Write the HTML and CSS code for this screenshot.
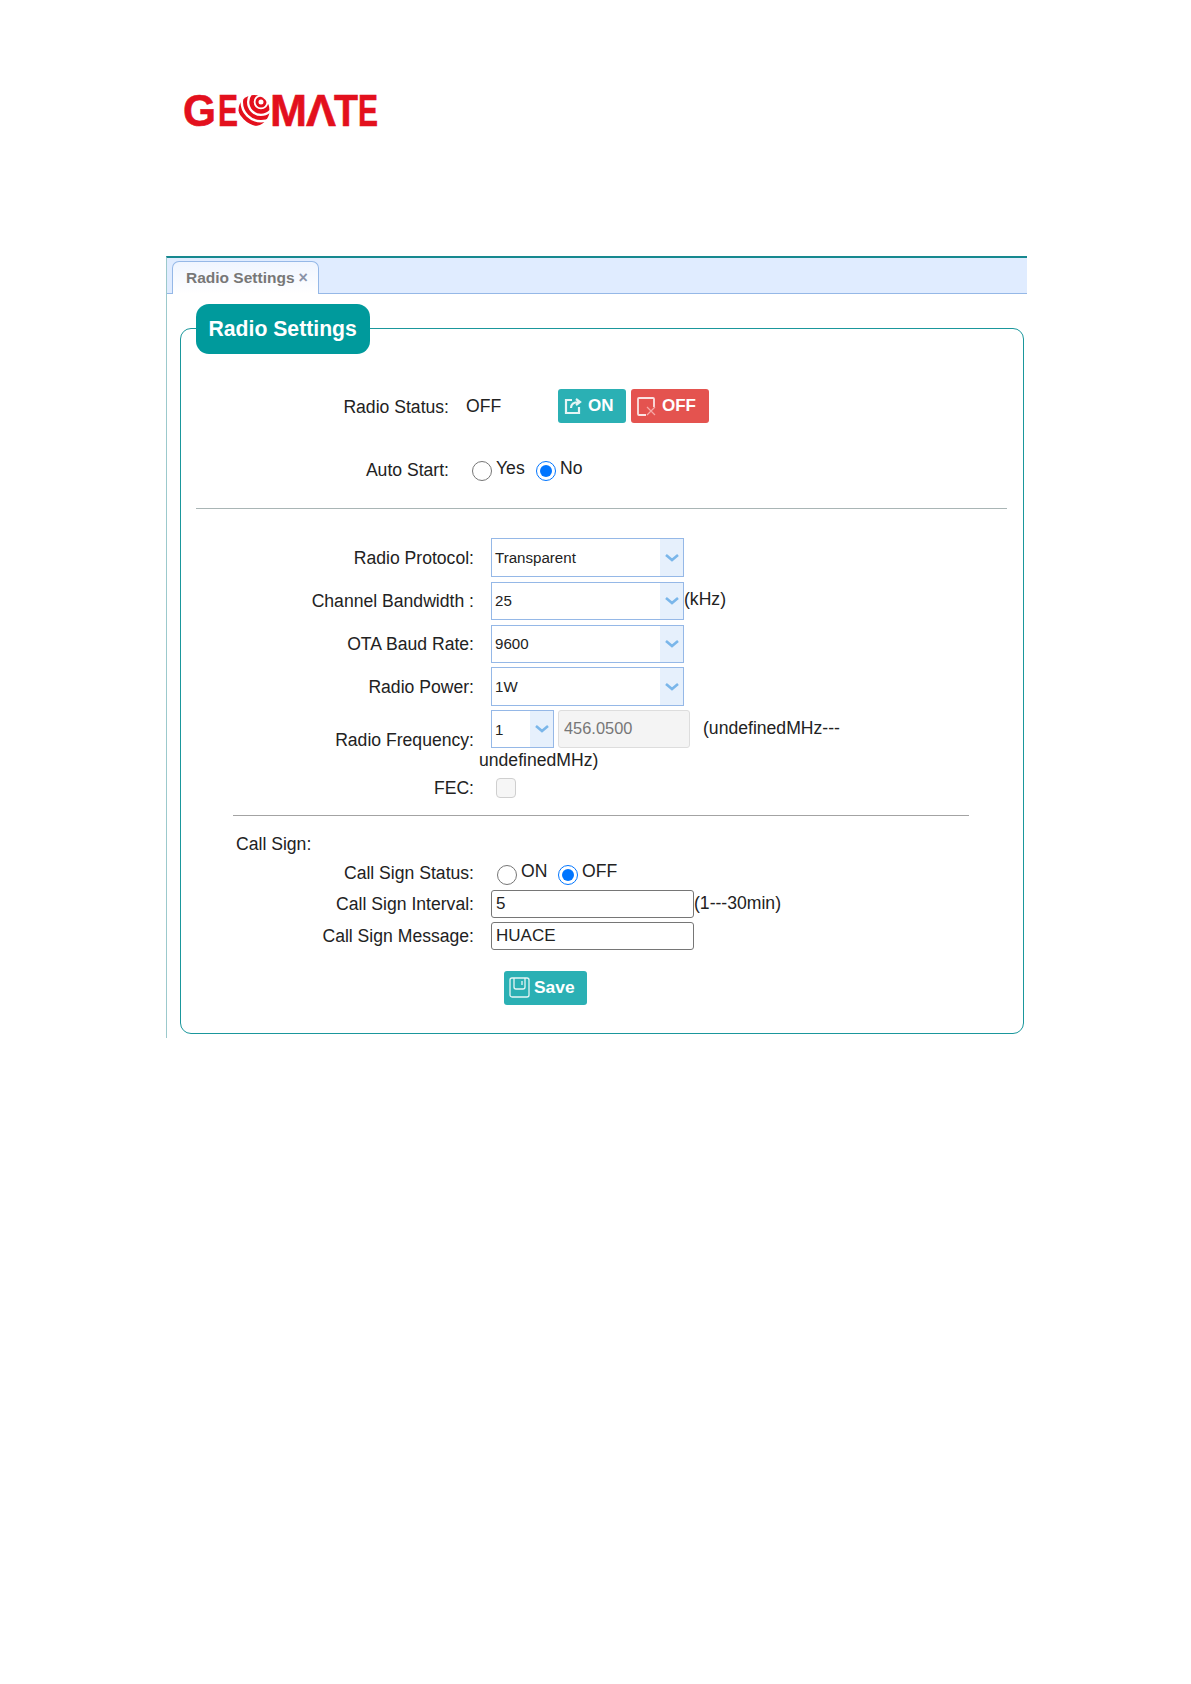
FILE: index.html
```html
<!DOCTYPE html>
<html lang="en">
<head>
<meta charset="utf-8">
<title>Radio Settings</title>
<link rel="stylesheet" href="styles.css">
</head>
<body>
<header class="brand">
  <svg class="logo" width="200" height="40" viewBox="0 0 200 40" role="img" aria-label="GEOMATE">
    <defs><clipPath id="globe-clip"><circle cx="71" cy="20.5" r="15.5"/></clipPath></defs>
    <g class="logo-type">
      <text x="0" y="36" textLength="33" lengthAdjust="spacingAndGlyphs">G</text>
      <text x="35" y="36" textLength="20" lengthAdjust="spacingAndGlyphs">E</text>
      <text x="87" y="36" textLength="37" lengthAdjust="spacingAndGlyphs">M</text>
      <text x="123" y="36" textLength="30" lengthAdjust="spacingAndGlyphs">Λ</text>
      <text x="151" y="36" textLength="24" lengthAdjust="spacingAndGlyphs">T</text>
      <text x="175" y="36" textLength="20" lengthAdjust="spacingAndGlyphs">E</text>
    </g>
    <g class="logo-globe" clip-path="url(#globe-clip)">
      <circle cx="78" cy="12" r="4" stroke-width="3"/>
      <circle cx="78" cy="12" r="9.5" stroke-width="4.4"/>
      <circle cx="78" cy="12" r="16" stroke-width="4"/>
      <circle cx="78" cy="12" r="22.5" stroke-width="4"/>
      <circle cx="78" cy="12" r="29" stroke-width="3"/>
    </g>
  </svg>
</header>

<main class="panel">
  <nav class="tabs">
    <div class="tab"><span>Radio Settings</span><span class="tab-close">×</span></div>
  </nav>
  <fieldset class="box">
    <legend class="box-title">Radio Settings</legend>

    <div class="row row-status">
      <label class="label label-top">Radio Status:</label>
      <span class="status-value">OFF</span>
      <div class="actions">
        <button class="btn btn-on" type="button">
          <svg width="18" height="18" viewBox="0 0 18 18" class="btn-icon"><path d="M8 3H2v13h13v-6M7 11c0-4 3-6 8-6M12 2l4 3-4 3"/></svg>ON
        </button>
        <button class="btn btn-off" type="button">
          <svg width="20" height="19" viewBox="0 0 20 19" class="btn-icon"><path d="M9 18H2a1 1 0 0 1-1-1V2a1 1 0 0 1 1-1h14a1 1 0 0 1 1 1v8"/><path class="btn-x" d="M10 10l8 8M18 10l-8 8"/></svg>OFF
        </button>
      </div>
    </div>

    <div class="row row-auto">
      <label class="label label-top">Auto Start:</label>
      <div class="radios radios-auto">
        <input type="radio" name="auto"><span class="radio-text">Yes</span>
        <input type="radio" name="auto" checked><span class="radio-text">No</span>
      </div>
    </div>

    <hr class="rule rule-wide">

    <div class="row combo-row">
      <label class="label">Radio Protocol:</label>
      <div class="combo"><span class="combo-text">Transparent</span><span class="combo-arrow"><svg width="14" height="8" viewBox="0 0 14 8"><path d="M1 1l6 5 6-5"/></svg></span></div>
    </div>
    <div class="row combo-row combo-row-s">
      <label class="label">Channel Bandwidth :</label>
      <div class="combo"><span class="combo-text">25</span><span class="combo-arrow"><svg width="14" height="8" viewBox="0 0 14 8"><path d="M1 1l6 5 6-5"/></svg></span></div>
      <span class="unit unit-khz">(kHz)</span>
    </div>
    <div class="row combo-row combo-row-s combo-row-tight">
      <label class="label">OTA Baud Rate:</label>
      <div class="combo"><span class="combo-text">9600</span><span class="combo-arrow"><svg width="14" height="8" viewBox="0 0 14 8"><path d="M1 1l6 5 6-5"/></svg></span></div>
    </div>
    <div class="row combo-row combo-row-tight">
      <label class="label">Radio Power:</label>
      <div class="combo"><span class="combo-text">1W</span><span class="combo-arrow"><svg width="14" height="8" viewBox="0 0 14 8"><path d="M1 1l6 5 6-5"/></svg></span></div>
    </div>

    <div class="row row-freq">
      <label class="label">Radio Frequency:</label>
      <div class="freq">
        <div class="freq-line">
          <div class="combo combo-mini"><span class="combo-text">1</span><span class="combo-arrow"><svg width="14" height="8" viewBox="0 0 14 8"><path d="M1 1l6 5 6-5"/></svg></span></div>
          <input class="freq-input" type="text" value="456.0500" disabled>
          <span class="freq-range">(undefinedMHz---</span>
        </div>
        <div class="freq-note">undefinedMHz)</div>
      </div>
    </div>

    <div class="row row-fec">
      <label class="label">FEC:</label>
      <input class="check" type="checkbox" disabled>
    </div>

    <hr class="rule rule-inner">

    <div class="group-title">Call Sign:</div>

    <div class="row row-callstatus">
      <label class="label">Call Sign Status:</label>
      <div class="radios radios-call">
        <input type="radio" name="call"><span class="radio-text">ON</span>
        <input type="radio" name="call" checked><span class="radio-text">OFF</span>
      </div>
    </div>
    <div class="row row-input">
      <label class="label">Call Sign Interval:</label>
      <input class="field" type="text" value="5">
      <span class="unit">(1---30min)</span>
    </div>
    <div class="row row-input">
      <label class="label">Call Sign Message:</label>
      <input class="field" type="text" value="HUACE">
    </div>

    <button class="btn btn-save" type="button">
      <svg width="21" height="21" viewBox="0 0 21 21" class="btn-icon btn-icon-thin"><path d="M3 1h15a2 2 0 0 1 2 2v15a2 2 0 0 1-2 2H3a2 2 0 0 1-2-2V3a2 2 0 0 1 2-2z"/><path d="M5 1v9a2 2 0 0 0 2 2h7a2 2 0 0 0 2-2V1M13 4v4"/></svg>Save
    </button>
  </fieldset>
</main>
</body>
</html>
```
FILE: styles.css
```css
* { box-sizing: border-box; }

body {
  margin: 0;
  background: #fff;
  color: #222;
  font-family: "Liberation Sans", Arial, sans-serif;
  font-size: 17.6px;
}

.brand {
  height: 256px;
  padding: 90px 0 0 183px;
}

.logo { display: block; overflow: visible; }
.logo-type text {
  font-family: "Liberation Sans", Arial, sans-serif;
  font-weight: 700;
  font-size: 44px;
  fill: #e3101d;
  stroke: #e3101d;
  stroke-width: 0.6;
}
.logo-globe circle { fill: none; stroke: #e3101d; }

.panel {
  width: 861px;
  height: 782px;
  margin-left: 166px;
  border-top: 2px solid #16888f;
  border-left: 1px solid #9cc9cc;
}

.tabs {
  height: 36px;
  padding: 3px 0 0 5px;
  background: #e0ecff;
  border-bottom: 1px solid #95b8e7;
}

.tab {
  display: flex;
  align-items: center;
  gap: 4px;
  width: 147px;
  height: 33px;
  padding: 0 0 0 13px;
  background: linear-gradient(#eff5ff, #fff);
  border: 1px solid #95b8e7;
  border-bottom: 0;
  border-radius: 7px 7px 0 0;
  color: #777;
  font-size: 15.5px;
  font-weight: 700;
}
.tab-close { color: #8a93a8; font-size: 16px; }

.box {
  width: 844px;
  min-width: 0;
  margin: 9px 0 0 13px;
  padding: 0 0 28px;
  border: 1px solid #1a979c;
  border-radius: 11px;
}

.box-title {
  position: relative;
  top: 1px;
  width: 174px;
  height: 50px;
  margin: 1px 0 0 15px;
  padding: 0 0 0 12.5px;
  background: #009a9c;
  border-radius: 13px;
  color: #fff;
  font-size: 21.2px;
  font-weight: 700;
  line-height: 50px;
}

.row { display: flex; align-items: center; }

.label {
  flex: none;
  width: 293px;
  text-align: right;
}
.label-top { width: 268px; }

.row-status { height: 34px; margin-top: 36px; }
.row-status .label { padding-top: 2px; }
.status-value { margin-left: 17px; width: 92px; }
.actions { display: flex; gap: 5px; }

.btn {
  display: inline-flex;
  align-items: center;
  height: 34px;
  padding: 0;
  border: 0;
  border-radius: 3px;
  color: #fff;
  font-family: inherit;
  font-weight: 700;
  font-size: 17px;
}
.btn-on { width: 68px; padding-left: 6px; gap: 6px; background: #2bb0b4; }
.btn-off { width: 78px; padding-left: 6px; gap: 5px; background: #e4534f; }
.btn-save {
  display: flex;
  width: 83px;
  margin: 21px 0 0 323px;
  padding: 0 0 2px 5px;
  gap: 4px;
  background: #2bb0b4;
  font-size: 17.4px;
}
.btn-icon { fill: none; stroke: #e6f5f5; stroke-width: 2.2; flex: none; }
.btn-icon-thin { stroke-width: 1.3; }
.btn-off .btn-icon { stroke: #fbe3e2; stroke-width: 1.8; }
.btn-off .btn-x { stroke: #f6a9a6; stroke-width: 1.2; }

.row-auto { height: 36px; margin-top: 29px; }
.radios { display: flex; align-items: center; }
.radios input {
  flex: none;
  width: 20px;
  height: 20px;
  margin: 2px 4px 0 0;
}
.radio-text { margin-top: -4px; }
.radios-auto { margin-left: 23px; }
.radios-auto .radio-text:nth-of-type(1) { width: 40px; }
.radios-call { margin-left: 23px; }
.radios-call .radio-text:nth-of-type(1) { width: 37px; }

.rule {
  height: 1px;
  margin: 0;
  border: 0;
  background: #a9b5b5;
}
.rule-wide { width: 811px; margin: 20px 0 29px 15px; }
.rule-inner { width: 736px; margin: 17px 0 18px 52px; background: #a3a3a3; }

.combo-row { margin-bottom: 5px; }
.combo-row .label { padding-top: 1px; }
.combo-row .combo { height: 39px; }
.combo-row-s .combo { height: 38px; }
.combo-row-s .combo-text { padding-bottom: 2px; }
.combo-row-tight { margin-bottom: 4px; }

.combo {
  display: flex;
  flex: none;
  width: 193px;
  margin-left: 17px;
  background: #fff;
  border: 1px solid #95b8e7;
}
.combo-text {
  display: flex;
  align-items: center;
  flex: 1;
  padding-left: 3px;
  font-size: 15.1px;
}
.combo-arrow {
  display: flex;
  align-items: center;
  justify-content: center;
  width: 23px;
  background: #e6f0fc;
}
.combo-arrow svg { fill: none; stroke: #7ab6ea; stroke-width: 2.6; }

.unit { margin-top: -2px; }
.unit-khz { margin-top: -4px; }

.row-freq { height: 60px; }
.freq { margin-left: 5px; }
.freq-line { display: flex; align-items: center; height: 38px; padding-left: 12px; }
.combo-mini { width: 63px; height: 38px; margin-left: 0; }
.freq-input {
  width: 132px;
  height: 38px;
  margin-left: 4px;
  padding: 0 0 2px 5px;
  background: #f4f4f4;
  border: 1px solid #ddd;
  border-radius: 3px;
  color: #777;
  font: inherit;
  font-size: 16.4px;
}
.freq-range { margin-left: 13px; margin-top: -2px; }
.freq-note { margin-top: 2px; line-height: 20px; }

.row-fec { height: 21px; margin-top: 7px; }
.row-fec .label { padding-top: 2px; }
.check {
  appearance: none;
  width: 20px;
  height: 20px;
  margin: 0 0 0 22px;
  background: #f6f6f6;
  border: 1px solid #cfcfcf;
  border-radius: 4px;
}

.group-title { height: 21px; margin-left: 55px; line-height: 21px; }

.row-callstatus { height: 21px; margin-top: 8px; }
.row-input { height: 28px; margin-bottom: 4px; }
.row-callstatus + .row-input { margin-top: 6px; }

.field {
  width: 203px;
  height: 28px;
  margin-left: 17px;
  padding: 0 4px;
  background: #fff;
  border: 1px solid #767676;
  border-radius: 3px;
  color: #222;
  font: inherit;
  font-size: 17px;
}
```
